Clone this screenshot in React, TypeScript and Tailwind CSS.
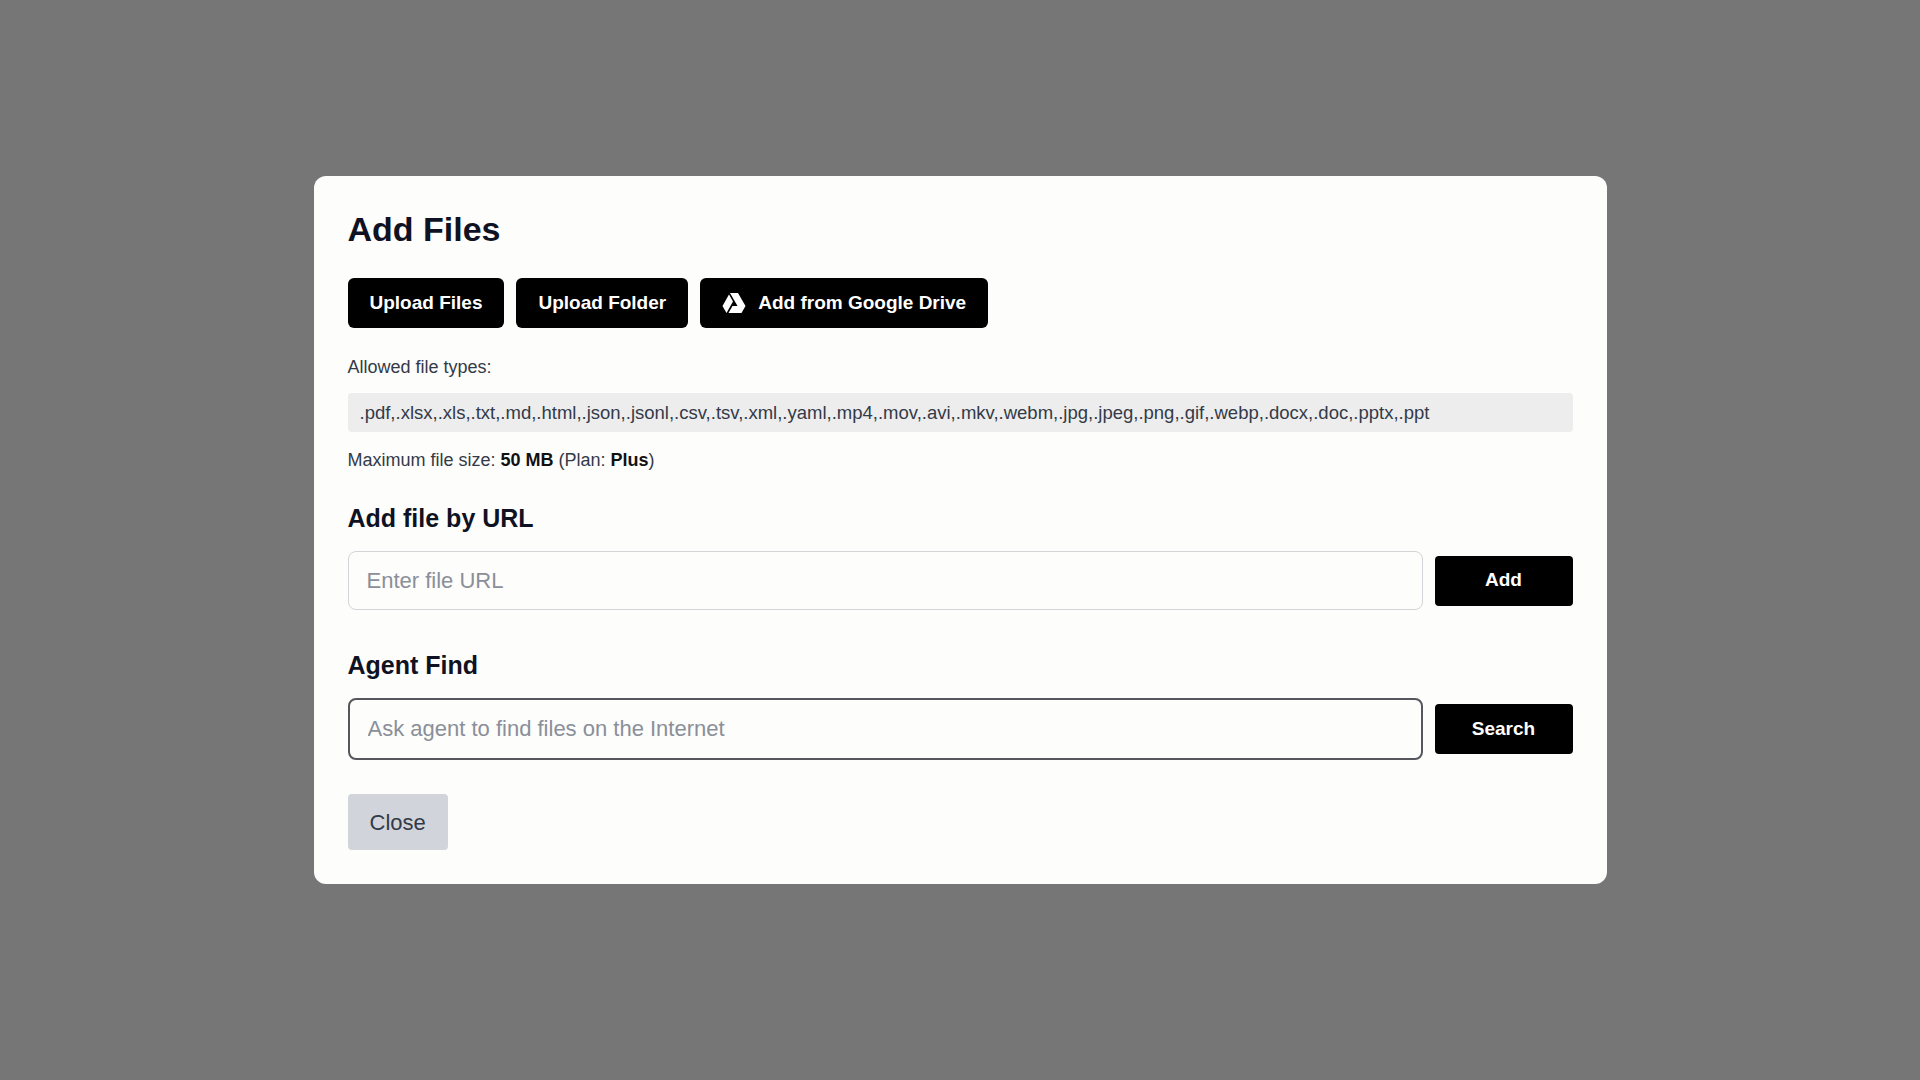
const types =
  ".pdf,.xlsx,.xls,.txt,.md,.html,.json,.jsonl,.csv,.tsv,.xml,.yaml,.mp4,.mov,.avi,.mkv,.webm,.jpg,.jpeg,.png,.gif,.webp,.docx,.doc,.pptx,.ppt";

const DriveIcon = () => (
  <svg width="24" height="22" viewBox="0 0 24 22" fill="white">
    <path d="M8 1h8l7.5 13h-8z" />
    <path d="M7 2.5l4 7-6.5 11.5-4-7z" />
    <path d="M6.5 21l4-7h13l-4 7z" />
  </svg>
);

const btn = "h-[50px] px-[22px] rounded-md bg-black text-white text-[19px] font-semibold flex items-center gap-3";

export default function App() {
  return (
    <div
      className="w-full h-[1080px] bg-[#767676] flex items-start justify-center pt-[176px]"
      style={{ fontFamily: '"Liberation Sans", Arial, sans-serif' }}
    >
      <div className="w-[1293px] rounded-xl bg-[#fdfdfb] px-[34px] pt-[36px] pb-[34px] text-[#0f1222]">
        <h1 className="text-[34px] font-bold leading-none">Add Files</h1>
        <div className="flex gap-3 mt-[32px]">
          <button className={btn}>Upload Files</button>
          <button className={btn}>Upload Folder</button>
          <button className={btn}>
            <DriveIcon />
            Add from Google Drive
          </button>
        </div>
        <div className="mt-[26px] text-[18px] text-[#333a48]">Allowed file types:</div>
        <div className="mt-[12px] h-[39px] bg-[#ededed] rounded px-3 flex items-center text-[18.5px] text-[#333a48]">
          {types}
        </div>
        <div className="mt-[15px] text-[18px] text-[#333a48]">
          Maximum file size: <b className="text-[#111]">50 MB</b> (Plan: <b className="text-[#111]">Plus</b>)
        </div>
        <h2 className="mt-[32px] text-[25px] font-bold leading-none">Add file by URL</h2>
        <div className="flex gap-3 items-center mt-[20px]">
          <input
            className="flex-1 h-[59px] rounded-lg border border-[#d4d4d8] px-[18px] text-[22px] bg-transparent outline-none placeholder:text-[#8a8f99]"
            placeholder="Enter file URL"
          />
          <button className="w-[138px] h-[50px] rounded bg-black text-white text-[19px] font-semibold">Add</button>
        </div>
        <h2 className="mt-[43px] text-[25px] font-bold leading-none">Agent Find</h2>
        <div className="flex gap-3 items-center mt-[20px]">
          <input
            className="flex-1 h-[62px] rounded-lg border-2 border-[#55575c] px-[18px] text-[22px] bg-transparent outline-none placeholder:text-[#8a8f99]"
            placeholder="Ask agent to find files on the Internet"
          />
          <button className="w-[138px] h-[50px] rounded bg-black text-white text-[19px] font-semibold">Search</button>
        </div>
        <button className="mt-[34px] h-[56px] px-[22px] rounded bg-[#d1d5db] text-[#333a48] text-[22px]">Close</button>
      </div>
    </div>
  );
}
